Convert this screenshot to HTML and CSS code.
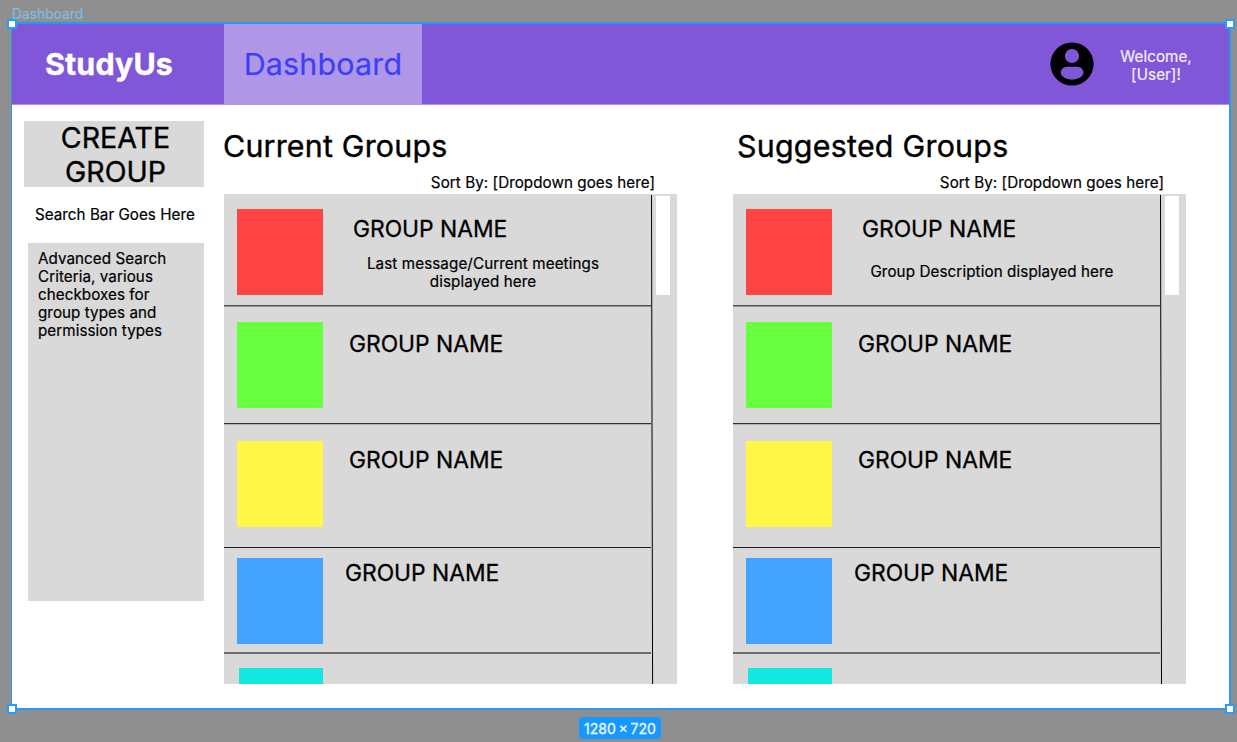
FILE: index.html
```html
<!DOCTYPE html>
<html lang="en">
<head>
<meta charset="utf-8">
<title>Dashboard</title>
<link rel="stylesheet" href="styles.css">
</head>
<body>
<div class="canvas">
  <div class="frame-label">Dashboard</div>
  <div class="frame">
    <header class="topbar">
      <div class="logo">StudyUs</div>
      <nav class="tab">Dashboard</nav>
      <div class="user">
        <svg class="avatar" viewBox="0 0 44 44"><path fill="#000" fill-rule="evenodd" d="M22 .4a21.6 21.6 0 1 0 0 43.2a21.6 21.6 0 1 0 0-43.2zM22 6.9a7.1 7.1 0 1 1 0 14.2a7.1 7.1 0 1 1 0-14.2zM17 24.7H27.500C31 24.700 33.500 27.500 33.500 30.500C33.500 34.500 28 37.600 22.200 37.600C16 37.600 10.800 34.500 10.800 30.500C10.800 27.500 13.500 24.700 17 24.700z"/></svg>
        <div class="welcome">Welcome,<br>[User]!</div>
      </div>
    </header>
    <div class="content">
      <aside class="sidebar">
        <div class="create">CREATE<br>GROUP</div>
        <div class="search">Search Bar Goes Here</div>
        <div class="advanced">Advanced Search<br>Criteria, various<br>checkboxes for<br>group types and<br>permission types</div>
      </aside>
      <section class="groups">
        <h2 class="title">Current Groups</h2>
        <div class="sort">Sort By: [Dropdown goes here]</div>
        <div class="panel">
          <div class="list">
            <div class="row row-1"><div class="swatch red"></div><div class="info"><div class="name">GROUP NAME</div><div class="desc">Last message/Current meetings<br>displayed here</div></div></div>
            <div class="row row-2"><div class="swatch green"></div><div class="name">GROUP NAME</div></div>
            <div class="row row-3"><div class="swatch yellow"></div><div class="name">GROUP NAME</div></div>
            <div class="row row-4"><div class="swatch blue"></div><div class="name">GROUP NAME</div></div>
            <div class="row row-5"><div class="swatch teal"></div></div>
          </div>
          <svg class="divider" viewBox="0 0 3 490"><path d="M.5 1L1.600 490" stroke="#000" stroke-width="1"/></svg>
          <div class="scroll"><div class="thumb"></div></div>
        </div>
      </section>
      <section class="groups">
        <h2 class="title title-suggested">Suggested Groups</h2>
        <div class="sort">Sort By: [Dropdown goes here]</div>
        <div class="panel">
          <div class="list">
            <div class="row row-1"><div class="swatch red"></div><div class="info"><div class="name">GROUP NAME</div><div class="desc desc-single">Group Description displayed here</div></div></div>
            <div class="row row-2"><div class="swatch green"></div><div class="name">GROUP NAME</div></div>
            <div class="row row-3"><div class="swatch yellow"></div><div class="name">GROUP NAME</div></div>
            <div class="row row-4"><div class="swatch blue"></div><div class="name">GROUP NAME</div></div>
            <div class="row row-5"><div class="swatch teal"></div></div>
          </div>
          <svg class="divider" viewBox="0 0 3 490"><path d="M.5 1L1.500 490" stroke="#000" stroke-width="1"/></svg>
          <div class="scroll"><div class="thumb"></div></div>
        </div>
      </section>
    </div>
    <i class="handle top-left"></i><i class="handle top-right"></i><i class="handle bottom-left"></i><i class="handle bottom-right"></i>
  </div>
  <div class="size">1280 × 720</div>
</div>
</body>
</html>
```
FILE: styles.css
```css
* { box-sizing: border-box; }
body { margin: 0; background: #8f8f8f; font-family: Inter, "Liberation Sans", sans-serif; color: #000; font-size: 15.2px; line-height: 18px; letter-spacing: .06px; -webkit-text-stroke: .2px currentColor; }
.canvas { width: 1237px; height: 742px; overflow: hidden; display: flex; flex-direction: column; align-items: flex-start; }
.frame-label { height: 22px; flex: none; padding: 5px 0 0 12px; font-size: 13.8px; line-height: 18px; letter-spacing: 0; color: #83b9e2; }
.frame { position: relative; flex: none; margin-left: 11px; width: 1220px; height: 688px; background: #fff; border: 2px solid #2b98f0; border-left-width: 1px; }
.topbar { display: flex; height: 81px; background: #8057d9; border-bottom: 1px solid #b08fe6; }
.logo { width: 212px; padding: 22px 0 0 33px; font-size: 30.4px; line-height: 37px; font-weight: 700; letter-spacing: .15px; color: #fff; -webkit-text-stroke-width: .4px; }
.tab { width: 198px; height: 81px; padding-top: 22px; background: #af96e7; text-align: center; font-size: 30.4px; line-height: 37px; letter-spacing: .2px; color: #3a40fa; }
.user { display: flex; margin-left: auto; padding: 18px 37px 0 0; color: #fff; }
.avatar { width: 44px; height: 44px; }
.welcome { width: 72px; margin-left: 26px; padding-top: 6px; text-align: center; color: #f4effc; white-space: nowrap; }
.content { display: flex; }
.sidebar { width: 212px; padding: 16px 20px 0 12px; }
.create { height: 66px; padding: 0 0 0 3px; background: #d9d9d9; text-align: center; font-size: 28.5px; line-height: 34px; -webkit-text-stroke-width: .4px; }
.search { padding: 19px 0 0 11px; height: 56px; letter-spacing: .03px; white-space: nowrap; }
.advanced { margin-left: 4px; height: 358px; padding: 7px 0 0 10px; background: #d9d9d9; }
.groups { width: 453px; margin-right: 56px; flex: none; }
.groups:last-child { margin-right: 0; }
.title { margin: 0 0 0 -1px; padding: 23px 0 0; height: 68px; font-size: 30.4px; line-height: 37px; font-weight: 400; letter-spacing: .2px; white-space: nowrap; -webkit-text-stroke-width: .4px; }
.title-suggested { padding-left: 5px; letter-spacing: .25px; }
.sort { height: 21px; padding: 1px 22px 0 0; text-align: right; }
.panel { display: flex; width: 453px; height: 490px; background: #d9d9d9; overflow: hidden; }
.list { width: 427px; }
.divider { width: 3px; height: 490px; flex: none; }
.scroll { padding: 2px 0 0 2px; }
.thumb { width: 14px; height: 99px; background: #fff; }
.row { display: flex; padding-left: 13px; border-bottom: 1px solid #505050; }
.row-1 { height: 112px; padding-top: 15px; box-shadow: 0 1px #929292; }
.row-2 { height: 118px; padding-top: 16px; border-color: #333; box-shadow: 0 1px #b0b0b0; }
.row-3 { height: 124px; padding-top: 17px; border-color: #1f1f1f; }
.row-4 { height: 106px; padding-top: 10px; border-bottom: 2px solid #6c6c6c; }
.row-5 { height: 30px; padding: 14px 0 0 15px; border: 0; }
.swatch { width: 86px; height: 86px; flex: none; }
.red { background: #ff4444; }
.green { background: #69ff41; }
.yellow { background: #fff645; }
.blue { background: #44a3ff; }
.teal { width: 84px; height: 16px; background: #13e8df; }
.name { font-size: 22.8px; line-height: 28px; letter-spacing: 0; white-space: nowrap; margin-left: 26px; padding-top: 8px; -webkit-text-stroke-width: .3px; }
.info { width: 290px; margin-left: 4px; }
.info .name { padding-top: 6px; }
.row-3 .name { padding-top: 5px; }
.row-4 .name { margin-left: 22px; padding-top: 1px; }
.desc { width: 250px; margin: 12px 0 0 31px; text-align: center; letter-spacing: .1px; white-space: nowrap; }
.desc-single { margin-top: 20px; }
.handle { position: absolute; width: 10px; height: 10px; background: #fff; border: 2px solid #2b9bf5; }
.top-left { left: -5px; top: -5px; }
.top-right { right: -6px; top: -5px; }
.bottom-left { left: -5px; bottom: -6px; }
.bottom-right { right: -6px; bottom: -6px; }
.size { margin: 7px 0 0 579px; width: 82px; height: 22px; flex: none; border-radius: 3px; background: #1598ff; color: #eaf5ff; font-size: 14px; line-height: 23px; letter-spacing: 0; word-spacing: -1.2px; text-align: center; white-space: nowrap; -webkit-text-stroke-width: .35px; }
```
